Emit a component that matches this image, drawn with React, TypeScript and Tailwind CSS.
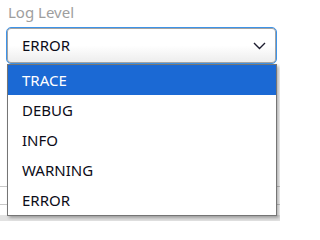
import { useState } from 'react'

const levels = ['TRACE', 'DEBUG', 'INFO', 'WARNING', 'ERROR']

export default function App() {
  const [active] = useState('TRACE')

  return (
    <div
      className="relative w-[280px] h-[222px] overflow-hidden bg-white"
      style={{ fontFamily: '"Noto Sans", "Open Sans", sans-serif' }}
    >
      {/* Label */}
      <div className="pl-[8px] pt-[2px] h-[27px] text-[15px] leading-[20px] text-[#9e9e9e]">Log Level</div>

      {/* Select */}
      <div className="mx-[6px] mr-[3px] h-[37px] rounded-[5px] border border-[#3d93e8] bg-gradient-to-b from-white via-white to-[#ececec] shadow-[inset_0_0_0_1px_#a3a3a3] flex items-center justify-between pl-[15px] pr-[10px]">
        <span className="text-[15px] text-[#0c0c18]">ERROR</span>
        <svg width="13" height="8" viewBox="0 0 13 8" className="mt-[1px]">
          <polyline points="1,1 6.5,6.5 12,1" fill="none" stroke="#1c1c2e" strokeWidth="1.4" />
        </svg>
      </div>

      {/* Page content underneath */}
      <div className="mt-[122px] h-[18px] border-t border-[#c8c8c8]" />
      <div className="h-[11px] border-t border-[#c8c8c8]" />
      <div className="h-[6px] bg-[#e2e2e2]" />

      {/* Dropdown list */}
      <ul className="absolute left-[7px] top-[64px] w-[270px] border border-[#757575] bg-white shadow-[2px_2px_3px_rgba(0,0,0,0.3)]">
        {levels.map((level) => (
          <li
            key={level}
            className={`h-[30px] flex items-center pl-[14px] text-[15px] ${
              level === active ? 'bg-[#1b69d4] text-white' : 'text-[#0c0c18]'
            }`}
          >
            {level}
          </li>
        ))}
      </ul>
    </div>
  )
}
